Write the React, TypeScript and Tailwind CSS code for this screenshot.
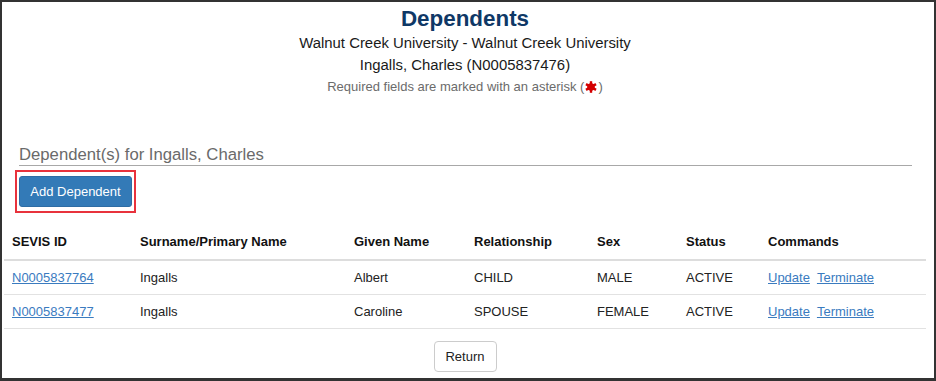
import React from "react";

const rows = [
  { id: "N0005837764", surname: "Ingalls", given: "Albert", rel: "CHILD", sex: "MALE", status: "ACTIVE" },
  { id: "N0005837477", surname: "Ingalls", given: "Caroline", rel: "SPOUSE", sex: "FEMALE", status: "ACTIVE" },
];

export default function App() {
  return (
    <div
      className="w-[936px] h-[381px] bg-white border-l-2 border-t-2 border-r-2 border-b-[3px] border-[#333] overflow-hidden"
      style={{ fontFamily: '"Liberation Sans", Arial, sans-serif' }}
    >
      <div className="ml-[2px] w-[922px] flex flex-col">
        <div className="pt-[4px] flex flex-col items-center">
          <h1 className="text-[22.4px] leading-[26px] font-bold text-[#0f3866]">Dependents</h1>
          <div className="text-[14.9px] leading-[22px] text-[#1a1a1a]">Walnut Creek University - Walnut Creek University</div>
          <div className="text-[14.9px] leading-[22px] text-[#1a1a1a]">Ingalls, Charles (N0005837476)</div>
          <div className="text-[13px] leading-[22px] text-[#6b6b6b] flex items-center">
            Required fields are marked with an asterisk (
            <svg width="12" height="12" viewBox="0 0 12 12" className="mx-[1px]">
              <g fill="#d40000">
                <circle cx="6" cy="6" r="3.8" />
                <path d="M4.8 0.2h2.4v11.6h-2.4z" />
                <path d="M4.8 0.2h2.4v11.6h-2.4z" transform="rotate(60 6 6)" />
                <path d="M4.8 0.2h2.4v11.6h-2.4z" transform="rotate(120 6 6)" />
              </g>
            </svg>
            )
          </div>
        </div>

        <div className="mt-[47px] ml-[15px] mr-[14px] border-b border-[#a8a8a8]">
          <div className="text-[16.7px] leading-[20px] text-[#6a6a6a]">Dependent(s) for Ingalls, Charles</div>
        </div>

        <div className="mt-[4px] ml-[11px] self-start border-2 border-[#e8323c] px-[2px] py-[4px]">
          <button className="w-[113px] h-[31px] bg-[#337ab7] border border-[#2e6da4] rounded-[3px] text-white text-[13px]">
            Add Dependent
          </button>
        </div>

        <table className="mt-[12px] table-fixed w-[922px] border-collapse text-[13px] text-[#222]">
          <thead>
            <tr className="border-b-2 border-[#dddddd]">
              <th className="w-[128px] text-left font-bold px-[8px] pt-[7px] pb-[7px] leading-[20px] text-[#111]">SEVIS ID</th>
              <th className="w-[214px] text-left font-bold px-[8px] leading-[20px] text-[#111]">Surname/Primary Name</th>
              <th className="w-[120px] text-left font-bold px-[8px] leading-[20px] text-[#111]">Given Name</th>
              <th className="w-[123px] text-left font-bold px-[8px] leading-[20px] text-[#111]">Relationship</th>
              <th className="w-[89px] text-left font-bold px-[8px] leading-[20px] text-[#111]">Sex</th>
              <th className="w-[82px] text-left font-bold px-[8px] leading-[20px] text-[#111]">Status</th>
              <th className="w-[166px] text-left font-bold px-[8px] leading-[20px] text-[#111]">Commands</th>
            </tr>
          </thead>
          <tbody>
            {rows.map((r) => (
              <tr key={r.id} className="border-b border-[#e2e2e2]">
                <td className="px-[8px] py-[6px] leading-[21px]">
                  <a href="#" className="text-[#3a7bbf] underline">{r.id}</a>
                </td>
                <td className="px-[8px] leading-[21px]">{r.surname}</td>
                <td className="px-[8px] leading-[21px]">{r.given}</td>
                <td className="px-[8px] leading-[21px]">{r.rel}</td>
                <td className="px-[8px] leading-[21px]">{r.sex}</td>
                <td className="px-[8px] leading-[21px]">{r.status}</td>
                <td className="px-[8px] leading-[21px]">
                  <a href="#" className="text-[#3a7bbf] underline">Update</a>
                  <span className="inline-block w-[7px]" />
                  <a href="#" className="text-[#3a7bbf] underline">Terminate</a>
                </td>
              </tr>
            ))}
          </tbody>
        </table>

        <div className="mt-[12px] flex justify-center">
          <button className="w-[63px] h-[31px] bg-white border border-[#cccccc] rounded-[4px] text-[13px] text-[#222]">
            Return
          </button>
        </div>
      </div>
    </div>
  );
}
